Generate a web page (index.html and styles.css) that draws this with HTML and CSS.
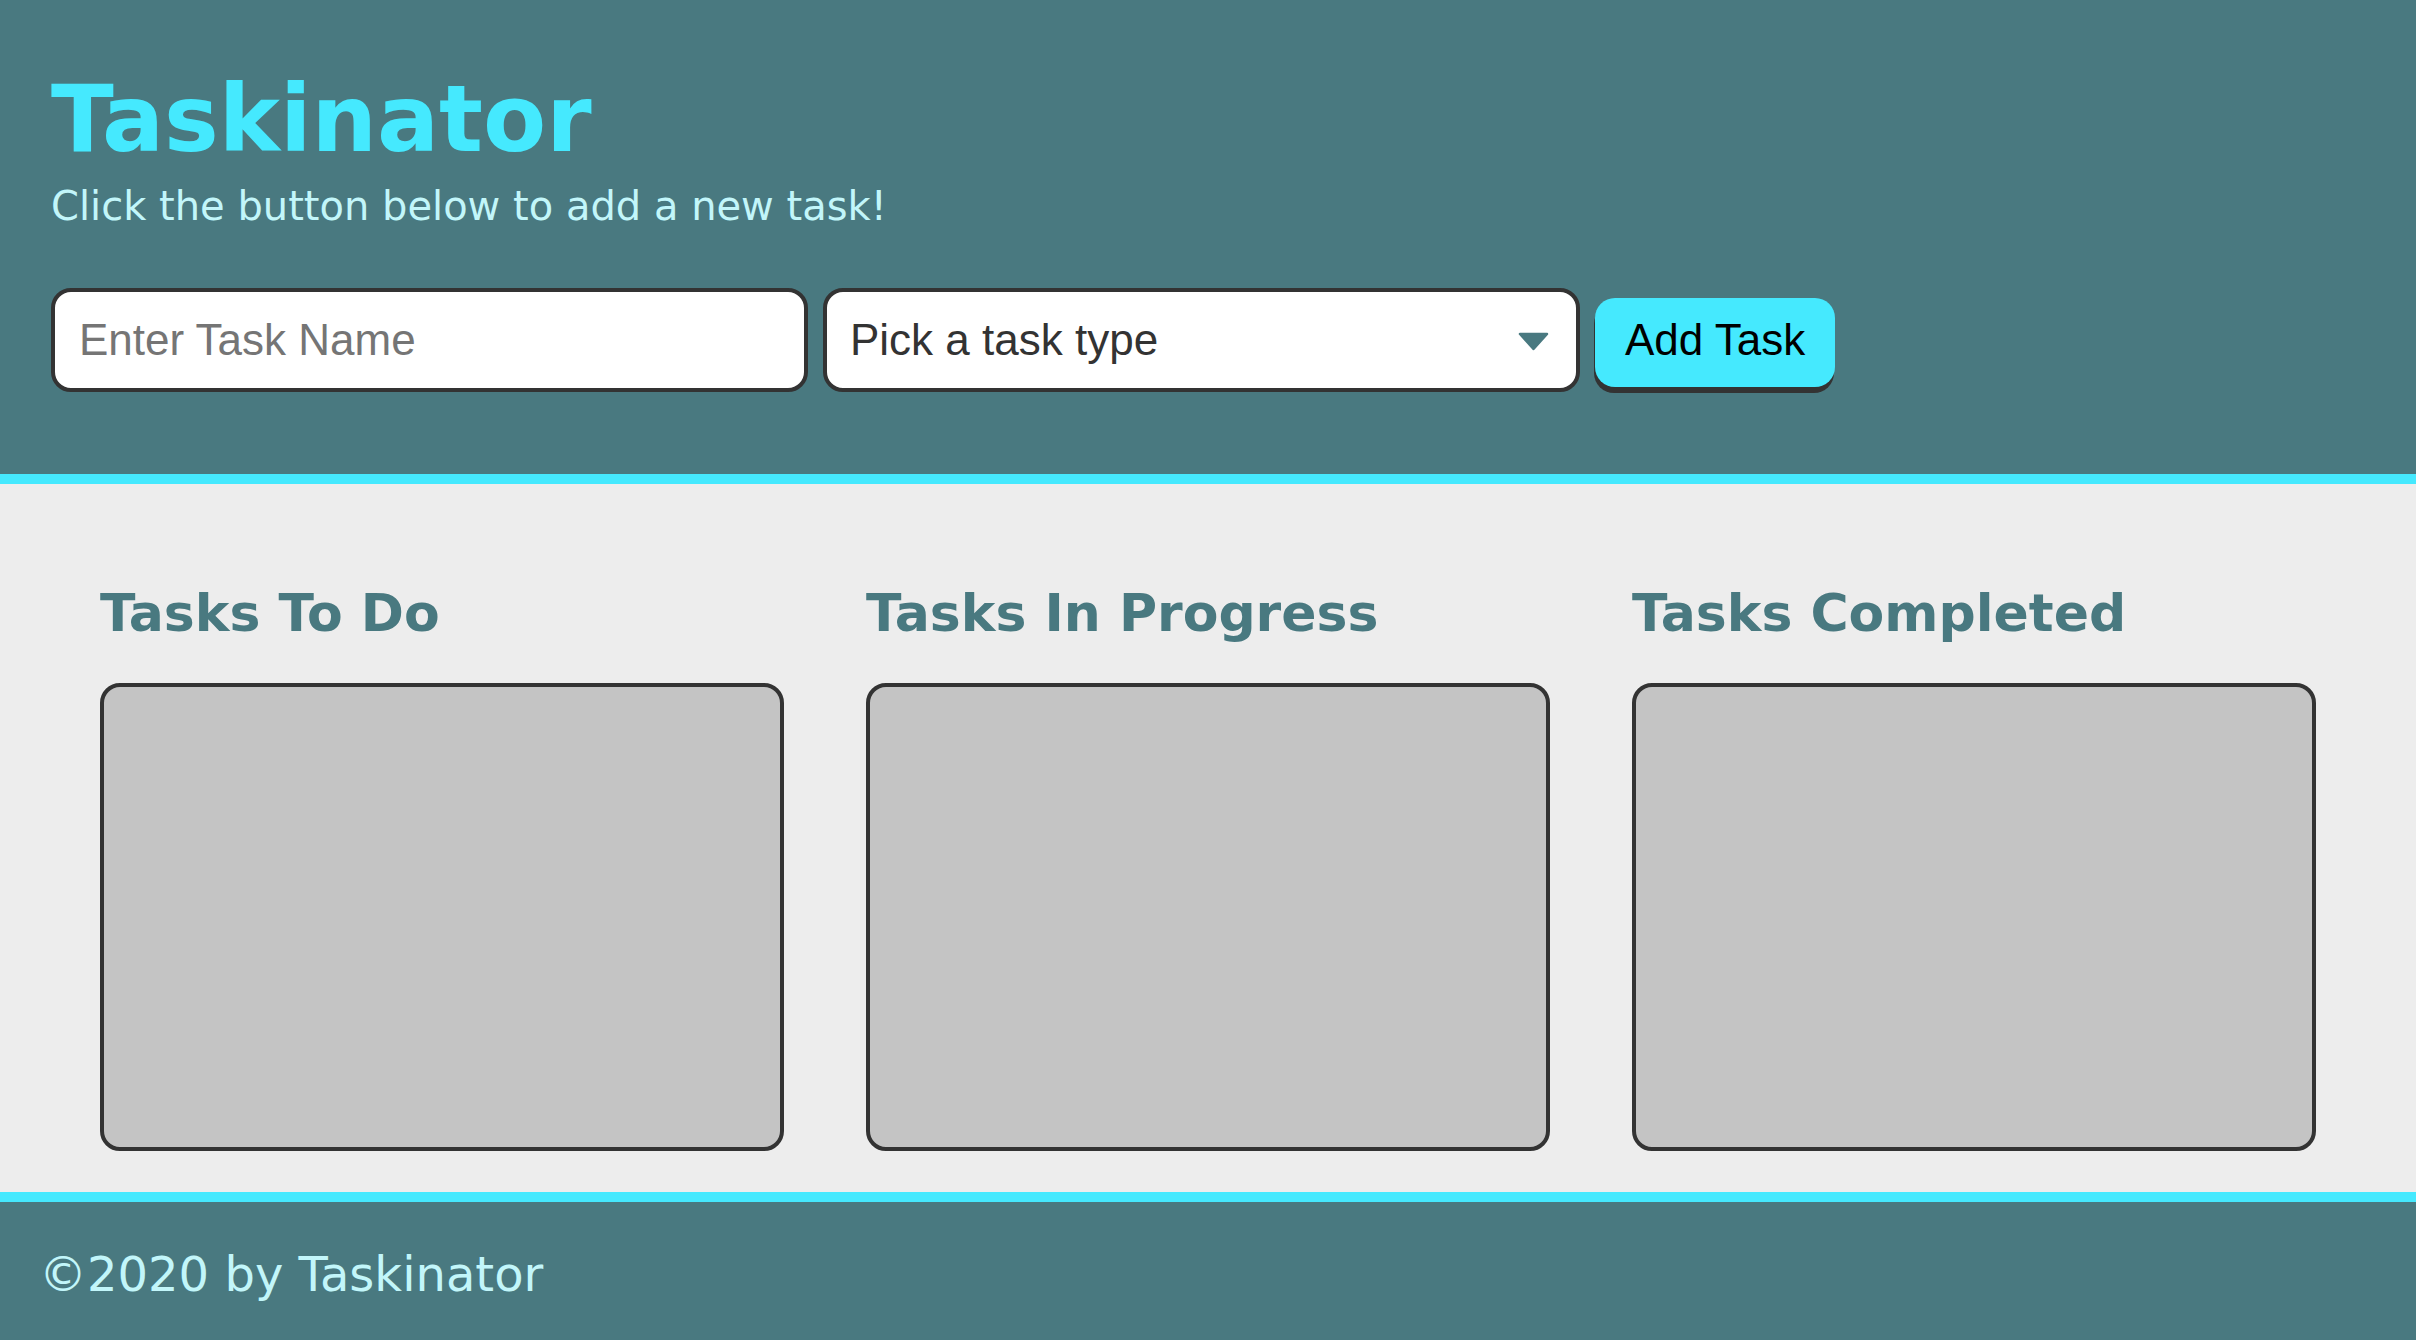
FILE: index.html
```html
<!DOCTYPE html>
<html lang="en">
<head>
<meta charset="UTF-8">
<title>Taskinator</title>
<link rel="stylesheet" href="styles.css">
</head>
<body>
<header class="page-header">
  <h1 class="page-title">Taskinator</h1>
  <p class="page-sub">Click the button below to add a new task!</p>
  <form class="task-form">
    <input class="text-input" type="text" placeholder="Enter Task Name">
    <div class="select-wrap">
      <select class="select-input">
        <option>Pick a task type</option>
      </select>
      <svg class="select-arrow" width="31" height="19" viewBox="0 0 31 19"><path d="M2 2 H29 L15.5 17 Z" fill="#497980" stroke="#497980" stroke-width="2.5" stroke-linejoin="round"/></svg>
    </div>
    <button class="btn" type="button">Add Task</button>
  </form>
</header>
<main class="page-content">
  <section class="task-list-wrapper">
    <h2 class="list-title">Tasks To Do</h2>
    <div class="task-list"></div>
  </section>
  <section class="task-list-wrapper">
    <h2 class="list-title">Tasks In Progress</h2>
    <div class="task-list"></div>
  </section>
  <section class="task-list-wrapper">
    <h2 class="list-title">Tasks Completed</h2>
    <div class="task-list"></div>
  </section>
</main>
<footer class="page-footer">
  <h3 class="footer-text">&copy;2020 by Taskinator</h3>
</footer>
</body>
</html>
```
FILE: styles.css
```css
* { box-sizing: border-box; }
html, body { margin: 0; padding: 0; }
body {
  font-family: "DejaVu Sans", Verdana, sans-serif;
  background: #ededed;
}
.page-header {
  background: #497980;
  border-bottom: 10px solid #45e9fe;
  padding: 66px 51px 82px;
}
.page-title {
  margin: 0;
  font-size: 92px;
  font-weight: bold;
  color: #45e9fe;
  line-height: 1.164;
}
.page-sub {
  margin: 10px 0 0;
  font-size: 40px;
  color: #c2f6fa;
  line-height: 1.164;
}
.task-form {
  margin-top: 58px;
  display: flex;
  align-items: baseline;
  gap: 15px;
}
.text-input, .select-input {
  font-family: "Liberation Sans", Arial, sans-serif;
  font-size: 44px;
  line-height: 1.15;
  height: 104px;
  border: 4px solid #333;
  border-radius: 20px;
  background: #fff;
  padding: 0 24px;
  margin: 0;
  outline: none;
}
.text-input {
  width: 757px;
  color: #333;
}
.text-input::placeholder { color: #757575; }
.select-wrap {
  position: relative;
  display: flex;
}
.select-input {
  width: 757px;
  color: #333;
  appearance: none;
  -webkit-appearance: none;
  padding-left: 23px;
}
.select-arrow {
  position: absolute;
  right: 31px;
  top: 44px;
}
.btn {
  font-family: "Liberation Sans", Arial, sans-serif;
  font-size: 44px;
  line-height: 1.15;
  color: #000;
  background: #45e9fe;
  border: 0;
  border-radius: 20px;
  padding: 17px 30px 22px;
  margin: 0;
  box-shadow: -1px 6px 0 #333;
}
.page-content {
  display: flex;
  gap: 82px;
  padding: 99px 100px 41px;
}
.task-list-wrapper {
  flex: 1;
  display: flex;
  flex-direction: column;
}
.list-title {
  margin: 0 0 40px;
  font-size: 52px;
  font-weight: bold;
  color: #497980;
  line-height: 1.164;
}
.task-list {
  height: 468px;
  background: #c4c4c4;
  border: 4px solid #333;
  border-radius: 20px;
}
.page-footer {
  background: #497980;
  border-top: 10px solid #45e9fe;
  padding: 45px 39px 40px;
}
.footer-text {
  margin: 0;
  font-size: 48px;
  font-weight: normal;
  color: #c2f6fa;
  line-height: 1.164;
}
```
